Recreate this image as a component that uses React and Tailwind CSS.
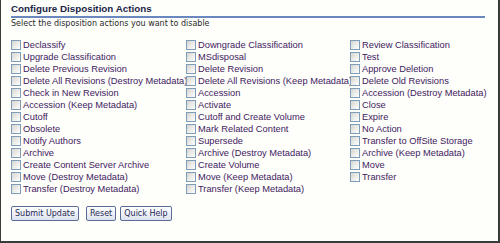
const columns = [
  [
    'Declassify',
    'Upgrade Classification',
    'Delete Previous Revision',
    'Delete All Revisions (Destroy Metadata)',
    'Check in New Revision',
    'Accession (Keep Metadata)',
    'Cutoff',
    'Obsolete',
    'Notify Authors',
    'Archive',
    'Create Content Server Archive',
    'Move (Destroy Metadata)',
    'Transfer (Destroy Metadata)',
  ],
  [
    'Downgrade Classification',
    'MSdisposal',
    'Delete Revision',
    'Delete All Revisions (Keep Metadata)',
    'Accession',
    'Activate',
    'Cutoff and Create Volume',
    'Mark Related Content',
    'Supersede',
    'Archive (Destroy Metadata)',
    'Create Volume',
    'Move (Keep Metadata)',
    'Transfer (Keep Metadata)',
  ],
  [
    'Review Classification',
    'Test',
    'Approve Deletion',
    'Delete Old Revisions',
    'Accession (Destroy Metadata)',
    'Close',
    'Expire',
    'No Action',
    'Transfer to OffSite Storage',
    'Archive (Keep Metadata)',
    'Move',
    'Transfer',
  ],
];

const colWidths = ['w-[175px]', 'w-[164px]', 'w-[140px]'];

function Item({ label }) {
  return (
    <label className="flex items-center h-[12px] whitespace-nowrap">
      <span className="w-[10px] h-[10px] shrink-0 border border-[#7f9db9] bg-gradient-to-br from-[#d6d6d0] to-white" />
      <span className="ml-[2px] text-[9.3px] leading-[12px] text-[#3f2160]">{label}</span>
    </label>
  );
}

function Button({ children, className = '' }) {
  return (
    <button
      className={`h-[15px] px-[3px] border border-[#5b6d96] rounded-[2px] bg-gradient-to-b from-white to-[#dde2ee] text-[8px] leading-[13px] text-[#1f2a55] ${className}`}
      style={{ fontFamily: '"DejaVu Sans", Verdana, sans-serif' }}
    >
      {children}
    </button>
  );
}

export default function App() {
  return (
    <div
      className="w-[500px] h-[243px] bg-[#fefefb] border-l border-r-2 border-b-2 border-[#3a3a3a] pl-[10px] overflow-hidden"
      style={{ fontFamily: '"Liberation Sans", Arial, sans-serif' }}
    >
      {/* Title */}
      <div className="w-[474px] mt-[3px] pb-[1px] border-b-2 border-[#6b87bf]">
        <h1 className="text-[9.8px] leading-[12px] font-bold text-[#1b1f48]">
          Configure Disposition Actions
        </h1>
      </div>
      <p
        className="mt-[1px] text-[8px] leading-[10px] text-[#2a2a2a]"
        style={{ fontFamily: '"DejaVu Sans", Verdana, sans-serif' }}
      >
        Select the disposition actions you want to disable
      </p>

      {/* Checkbox columns */}
      <div className="flex mt-[10px]">
        {columns.map((col, i) => (
          <div key={i} className={`flex flex-col ${colWidths[i]}`}>
            {col.map(label => (
              <Item key={label} label={label} />
            ))}
          </div>
        ))}
      </div>

      {/* Actions */}
      <div className="flex mt-[11px]">
        <Button>Submit Update</Button>
        <Button className="ml-[7px]">Reset</Button>
        <Button className="ml-[4px]">Quick Help</Button>
      </div>
    </div>
  );
}
